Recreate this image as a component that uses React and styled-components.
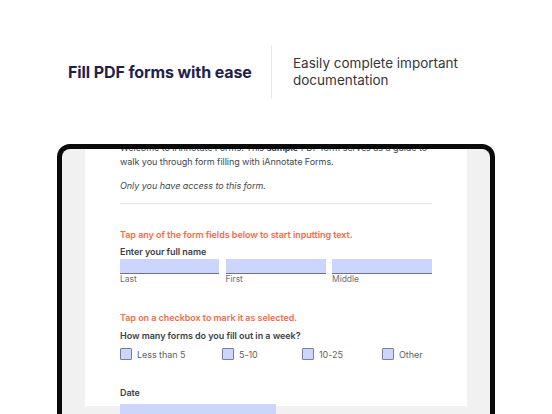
import React from 'react';
import styled, { createGlobalStyle } from 'styled-components';

const Global = createGlobalStyle`
  *, *::before, *::after {
    box-sizing: border-box;
  }
  html, body {
    margin: 0;
    padding: 0;
    background: #ffffff;
    overflow: hidden;
  }
  body {
    font-family: Inter, "Noto Sans", sans-serif;
  }
`;

const Page = styled.div`
  width: 552px;
  height: 414px;
  overflow: hidden;
  background: #ffffff;
`;

const Header = styled.header`
  display: flex;
  align-items: center;
  gap: 20px;
  padding: 45px 0 45px 68px;
`;

const Title = styled.h1`
  margin: 0;
  width: 183px;
  font-size: 16px;
  font-weight: 700;
  color: #1f2050;
  letter-spacing: -0.1px;
  white-space: nowrap;
`;

const Divider = styled.div`
  width: 1px;
  height: 54px;
  background: #e6eaf0;
`;

const Tagline = styled.p`
  margin: 0 0 0 1px;
  font-size: 13.5px;
  line-height: 17px;
  color: #35363c;
`;

const Device = styled.div`
  margin: 0 auto;
  width: 438px;
  height: 270px;
  border: 5px solid #0a0a0a;
  border-bottom: none;
  border-radius: 13px 13px 0 0;
  background: #f1f1f1;
  padding: 0 23px;
  overflow: hidden;
`;

const Sheet = styled.div`
  background: #ffffff;
  height: 100%;
  padding: 0 35px;
`;

const Scroll = styled.div`
  margin-top: -8px;
  color: #424752;
  font-size: 9px;
  letter-spacing: -0.05px;
`;

const Para = styled.p`
  margin: 0;
  line-height: 13.5px;
  font-style: ${p => (p.$italic ? 'italic' : 'normal')};
  margin-bottom: ${p => p.$gap || 0}px;
`;

const Rule = styled.hr`
  border: none;
  border-top: 1px solid #e3e5ea;
  margin: 10px 0 0;
`;

const Hint = styled.p`
  margin: ${p => p.$top}px 0 0;
  color: #f36b4d;
  font-weight: 600;
  line-height: 13px;
`;

const Question = styled.p`
  margin: ${p => p.$top || 4}px 0 0;
  color: #3a3f4b;
  font-weight: 600;
  line-height: 13px;
`;

const FieldRow = styled.div`
  display: grid;
  grid-template-columns: 99px 100px 100px;
  justify-content: space-between;
  margin-top: 1px;
`;

const Field = styled.div`
  height: 15px;
  width: ${p => (p.$width ? `${p.$width}px` : 'auto')};
  background: #ccd6fd;
  border-bottom: 1px solid #6c728e;
  margin-top: ${p => p.$top || 0}px;
`;

const SubLabel = styled.div`
  margin-top: 0;
  font-size: 8.5px;
  line-height: 11px;
  color: #6b707a;
`;

const Checks = styled.div`
  display: grid;
  grid-template-columns: 102px 80px 80px auto;
  margin-top: 6px;
`;

const Check = styled.label`
  display: flex;
  align-items: center;
  gap: 5px;
  color: #5c616b;
  line-height: 13px;
`;

const Box = styled.span`
  width: 12px;
  height: 12px;
  background: #ccd6fd;
  border: 1px solid #7a7f98;
  border-radius: 1px;
`;

const options = ['Less than 5', '5-10', '10-25', 'Other'];

export default function App() {
  return (
    <Page>
      <Global />
      <Header>
        <Title>Fill PDF forms with ease</Title>
        <Divider />
        <Tagline>
          Easily complete important
          <br />
          documentation
        </Tagline>
      </Header>
      <Device>
        <Sheet>
          <Scroll>
            <Para $gap={11}>
              Welcome to iAnnotate Forms! This <b>sample</b> PDF form serves as a guide to
              walk you through form filling with iAnnotate Forms.
            </Para>
            <Para $italic>Only you have access to this form.</Para>
            <Rule />
            <Hint $top={24}>Tap any of the form fields below to start inputting text.</Hint>
            <Question>Enter your full name</Question>
            <FieldRow>
              {['Last', 'First', 'Middle'].map(l => (
                <div key={l}>
                  <Field />
                  <SubLabel>{l}</SubLabel>
                </div>
              ))}
            </FieldRow>
            <Hint $top={26}>Tap on a checkbox to mark it as selected.</Hint>
            <Question $top={5}>How many forms do you fill out in a week?</Question>
            <Checks>
              {options.map(o => (
                <Check key={o}>
                  <Box />
                  {o}
                </Check>
              ))}
            </Checks>
            <Question $top={25}>Date</Question>
            <Field $width={156} $top={5} />
          </Scroll>
        </Sheet>
      </Device>
    </Page>
  );
}
